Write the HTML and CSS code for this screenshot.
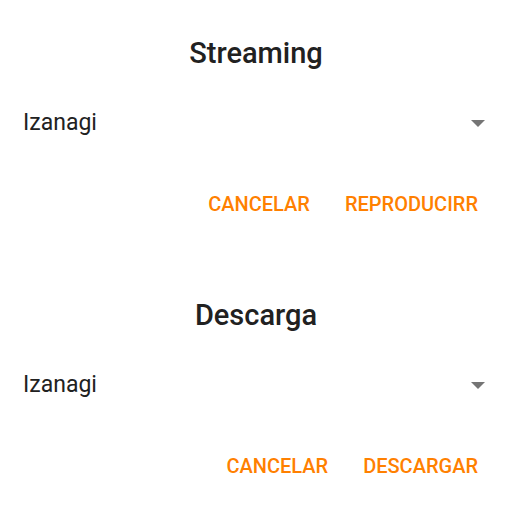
FILE: index.html
```html
<!DOCTYPE html>
<html>
<head>
<meta charset="utf-8">
<link rel="stylesheet" href="styles.css">
</head>
<body>
<div class="stack">
  <section class="dialog">
    <h2 class="title">Streaming</h2>
    <div class="select">
      <span class="value">Izanagi</span>
      <svg class="arrow" width="14" height="7" viewBox="0 0 14 7"><path d="M0 0H14L7 7Z" fill="#757575"/></svg>
    </div>
    <div class="actions">
      <span class="btn">CANCELAR</span>
      <span class="btn">REPRODUCIRR</span>
    </div>
  </section>
  <section class="dialog">
    <h2 class="title">Descarga</h2>
    <div class="select">
      <span class="value">Izanagi</span>
      <svg class="arrow" width="14" height="7" viewBox="0 0 14 7"><path d="M0 0H14L7 7Z" fill="#757575"/></svg>
    </div>
    <div class="actions">
      <span class="btn">CANCELAR</span>
      <span class="btn">DESCARGAR</span>
    </div>
  </section>
</div>
</body>
</html>
```
FILE: styles.css
```css
html, body {
  margin: 0;
  padding: 0;
  background: #ffffff;
  overflow: hidden;
}
body {
  font-family: Roboto, "Liberation Sans", sans-serif;
  width: 512px;
  height: 512px;
}
.stack {
  margin-top: -12px;
  display: flex;
  flex-direction: column;
}
.dialog {
  height: 262px;
  box-sizing: border-box;
  padding-top: 49px;
  display: flex;
  flex-direction: column;
}
.title {
  margin: 0;
  font-size: 29px;
  line-height: 32px;
  font-weight: 500;
  color: #212121;
  text-align: center;
}
.select {
  margin-top: 41px;
  padding: 0 27px 0 23px;
  display: flex;
  align-items: center;
  justify-content: space-between;
}
.value {
  font-size: 23px;
  line-height: 26px;
  color: #212121;
}
.arrow {
  display: block;
}
.actions {
  margin-top: 56px;
  padding-right: 34px;
  display: flex;
  justify-content: flex-end;
  gap: 35px;
}
.btn {
  font-size: 20px;
  line-height: 24px;
  font-weight: 500;
  color: #ff8000;
}
```
